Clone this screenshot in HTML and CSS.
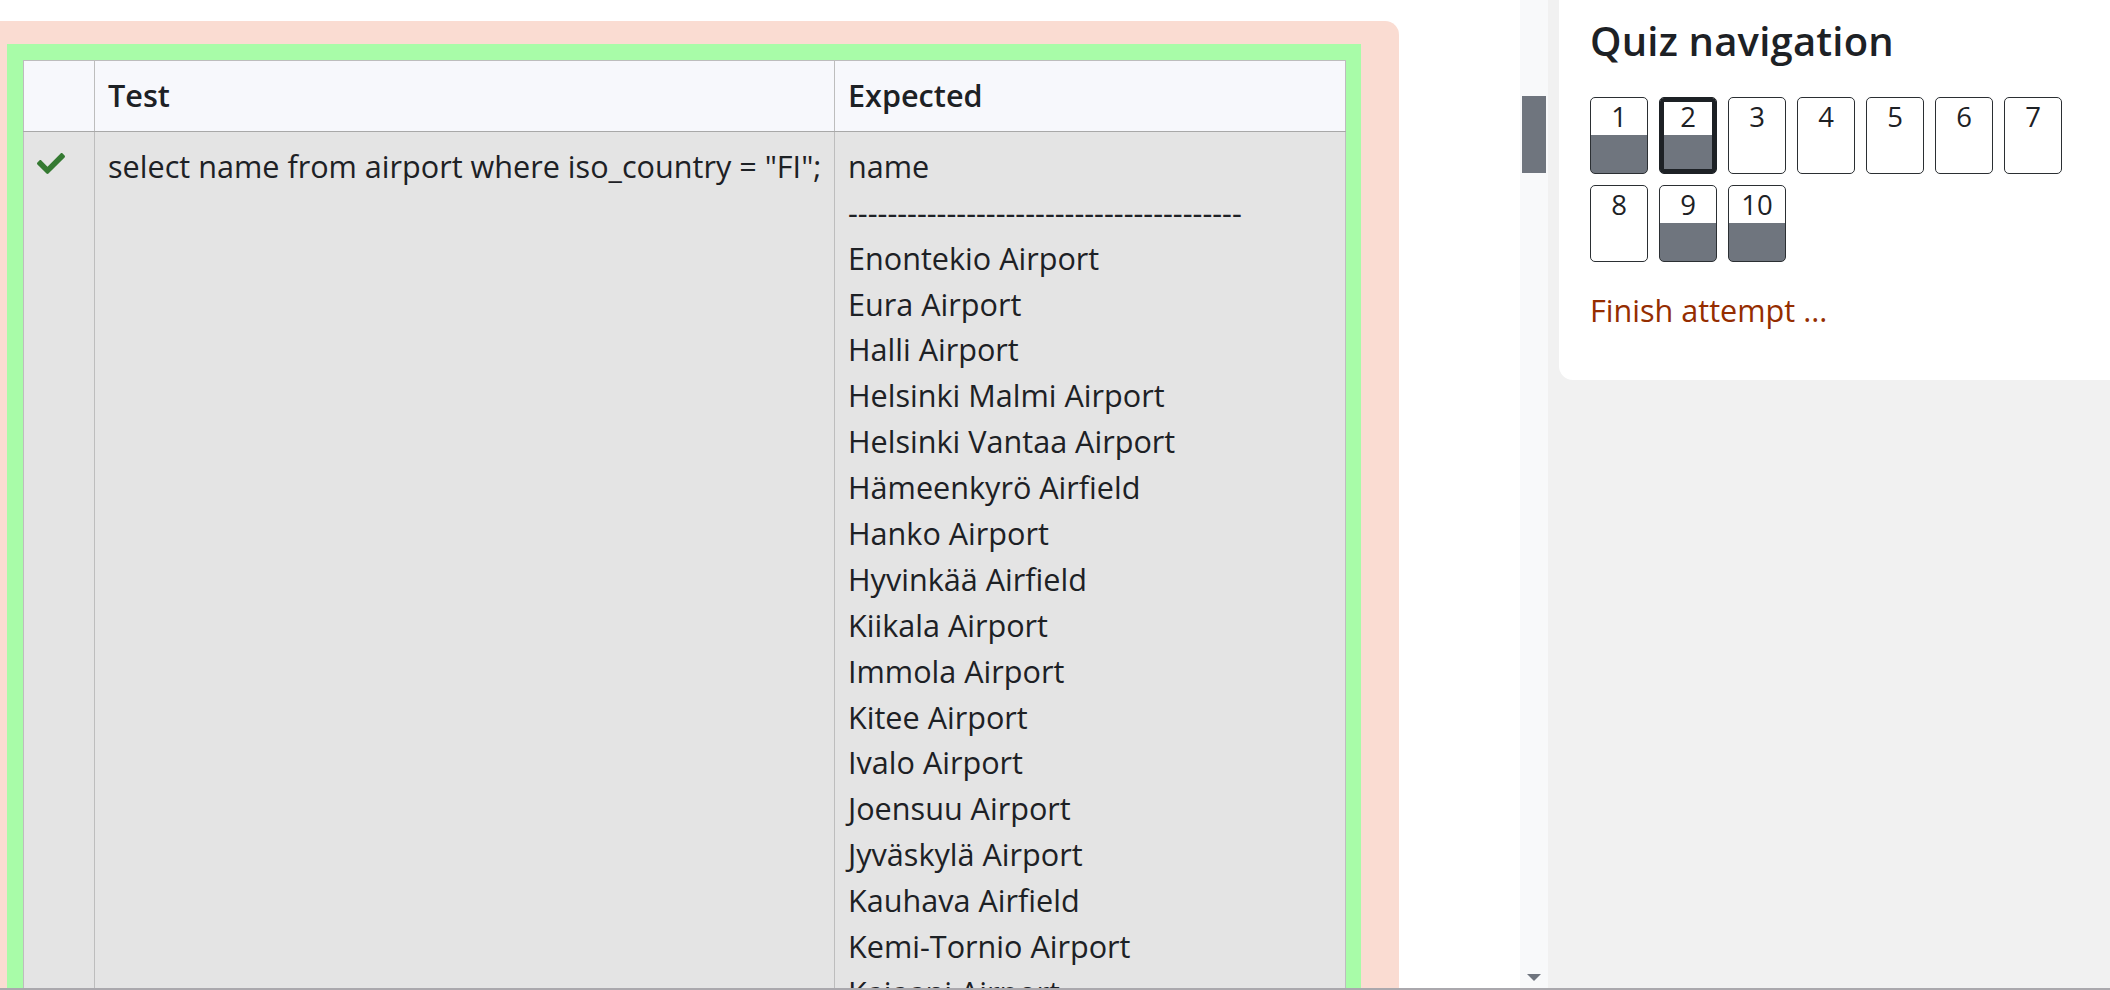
FILE: index.html
```html
<!DOCTYPE html>
<html lang="en">
<head>
<meta charset="utf-8">
<title>Quiz</title>
<link rel="stylesheet" href="styles.css">
</head>
<body>
<div class="page">
  <div class="main">
    <div class="content">
      <div class="result-outer">
        <div class="result-inner">
          <table class="results">
            <colgroup>
              <col class="c-icon">
              <col class="c-test">
              <col class="c-exp">
            </colgroup>
            <thead>
              <tr>
                <th></th>
                <th>Test</th>
                <th>Expected</th>
              </tr>
            </thead>
            <tbody>
              <tr>
                <td class="icon-cell">
                  <svg class="check" viewBox="0 0 512 380" aria-hidden="true">
                    <path d="M173.898 374.404l-166.4-166.4c-9.997-9.997-9.997-26.206 0-36.204l36.203-36.204c9.997-9.998 26.207-9.998 36.204 0L192 247.69 432.095 7.596c9.997-9.997 26.207-9.997 36.204 0l36.203 36.204c9.997 9.997 9.997 26.206 0 36.204l-294.4 294.401c-9.998 9.997-26.207 9.997-36.204-.001z"/>
                  </svg>
                </td>
                <td>select name from airport where iso_country = "FI";</td>
                <td class="expected">
                  <div>name</div>
                  <div>----------------------------------------</div>
                  <div>Enontekio Airport</div>
                  <div>Eura Airport</div>
                  <div>Halli Airport</div>
                  <div>Helsinki Malmi Airport</div>
                  <div>Helsinki Vantaa Airport</div>
                  <div>Hämeenkyrö Airfield</div>
                  <div>Hanko Airport</div>
                  <div>Hyvinkää Airfield</div>
                  <div>Kiikala Airport</div>
                  <div>Immola Airport</div>
                  <div>Kitee Airport</div>
                  <div>Ivalo Airport</div>
                  <div>Joensuu Airport</div>
                  <div>Jyväskylä Airport</div>
                  <div>Kauhava Airfield</div>
                  <div>Kemi-Tornio Airport</div>
                  <div>Kajaani Airport</div>
                  <div>Kokkola-Pietarsaari Airport</div>
                  <div>Kuopio Airport</div>
                </td>
              </tr>
            </tbody>
          </table>
        </div>
      </div>
    </div>
    <div class="vscroll">
      <div class="thumb"></div>
      <div class="arrow-down"></div>
    </div>
  </div>
  <aside class="drawer">
    <section class="card">
      <h5 class="card-title">Quiz navigation</h5>
      <div class="qn-grid">
        <a class="qn answered">1</a>
        <a class="qn answered current">2</a>
        <a class="qn">3</a>
        <a class="qn">4</a>
        <a class="qn">5</a>
        <a class="qn">6</a>
        <a class="qn">7</a>
        <a class="qn">8</a>
        <a class="qn answered">9</a>
        <a class="qn answered">10</a>
      </div>
      <a class="finish">Finish attempt ...</a>
    </section>
  </aside>
</div>
<div class="bottom-edge"></div>
</body>
</html>
```

FILE: styles.css
```css
html, body {
  margin: 0;
  padding: 0;
}

body {
  width: 2110px;
  height: 990px;
  overflow: hidden;
  background: #fff;
  color: #1d2125;
  font-family: "Open Sans", "Noto Sans", "Liberation Sans", sans-serif;
  font-size: 30.6px;
  line-height: 1.5;
}

.page {
  display: flex;
  height: 988px;
  overflow: hidden;
}

.main {
  display: flex;
  width: 1548px;
  flex: none;
}

.content {
  flex: 1;
  overflow: hidden;
  padding: 21px 121px 0 0;
  background: #fff;
}

.result-outer {
  background: #fadcd2;
  border-top-right-radius: 14px;
  padding: 23px 38px 0 7px;
}

.result-inner {
  background: #a8fca8;
  padding: 16px 15px 0 16px;
}

.results {
  width: 100%;
  table-layout: fixed;
  border-collapse: collapse;
  border: 1px solid #a8a8a8;
}

.c-icon { width: 71px; }
.c-test { width: 740px; }

.results th,
.results td {
  border: 1px solid #bdbdbd;
  text-align: left;
  vertical-align: top;
}

.results th {
  background: #f7f8fc;
  font-weight: 600;
  padding: 12px 13px 12px;
  border-bottom-color: #a8a8a8;
}

.results td {
  background: #e4e4e4;
  padding: 12px 13px 11px;
  white-space: nowrap;
}

.icon-cell {
  padding-left: 14px;
}

.check {
  display: block;
  width: 28px;
  height: 21px;
  margin-top: 9px;
  fill: #357a32;
}

.vscroll {
  width: 28px;
  flex: none;
  background: #f8f9fa;
  display: flex;
  flex-direction: column;
  align-items: center;
}

.thumb {
  width: 24px;
  height: 77px;
  margin-top: 96px;
  background: #6f757e;
}

.arrow-down {
  margin-top: auto;
  margin-bottom: 7px;
  width: 0;
  height: 0;
  border-left: 7px solid transparent;
  border-right: 7px solid transparent;
  border-top: 7px solid #6f757e;
}

.drawer {
  flex: 1;
  background: #f1f1f1;
  padding-left: 11px;
}

.card {
  background: #fff;
  border-bottom-left-radius: 14px;
  padding: 20px 0 46px 31px;
}

.card-title {
  margin: 0;
  font-size: 40px;
  font-weight: 600;
  line-height: 42px;
  letter-spacing: 0.2px;
  color: #1d2125;
}

.qn-grid {
  display: flex;
  flex-wrap: wrap;
  gap: 11px;
  width: 472px;
  margin-top: 35px;
}

.qn {
  box-sizing: border-box;
  width: 58px;
  height: 77px;
  border: 1px solid #2b2f33;
  border-radius: 5px;
  background: #fff;
  font-size: 27.5px;
  line-height: 37px;
  text-align: center;
  color: #1d2125;
}

.qn.answered {
  background: linear-gradient(to bottom, #fff 0, #fff 37px, #6f757e 37px, #6f757e 100%);
}

.qn.current {
  border-color: #1d2125;
  box-shadow: inset 0 0 0 4px #1d2125;
}

.finish {
  display: block;
  margin-top: 26px;
  color: #952d00;
  text-decoration: none;
}

.bottom-edge {
  height: 2px;
  background: #aaa8ad;
}
```
